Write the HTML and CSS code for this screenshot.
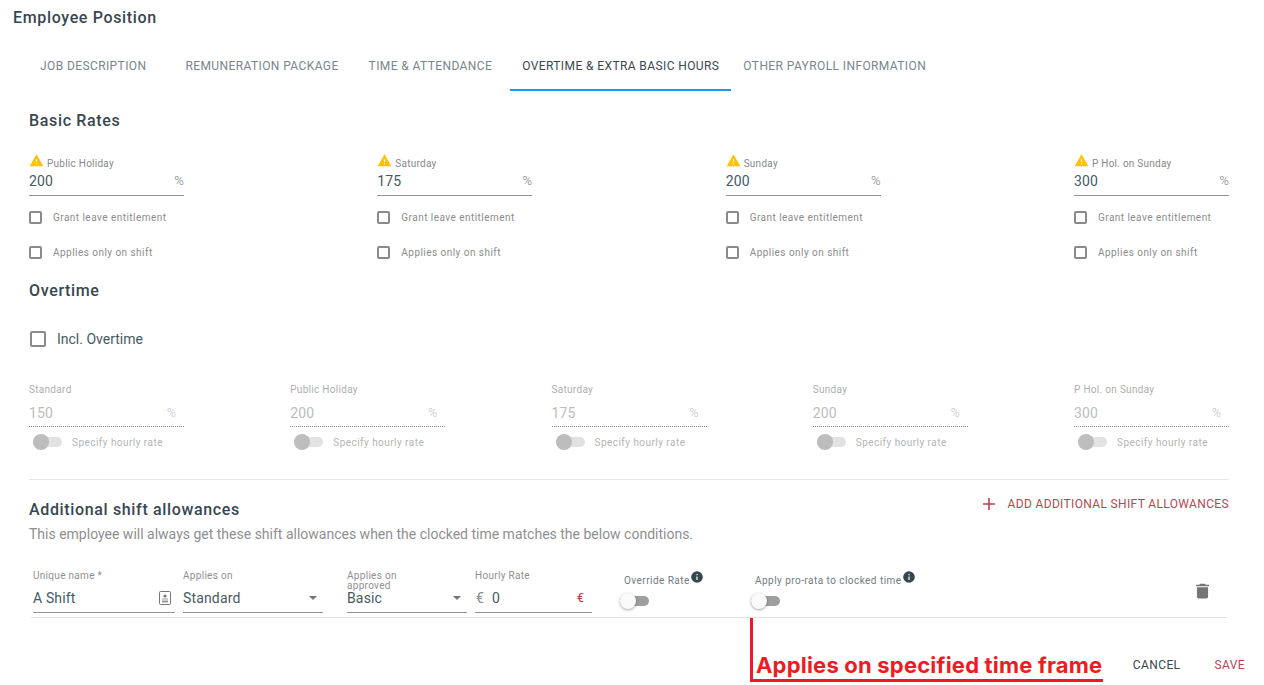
FILE: index.html
```html
<!DOCTYPE html>
<html lang="en">
<head>
    <meta charset="UTF-8">
    <title>Employee Position</title>
    <link rel="stylesheet" href="styles.css">
</head>
<body>
    <svg class="icon-defs" width="0" height="0">
        <symbol id="warn" viewBox="0 0 24 24"><path d="M1 21h22L12 2 1 21zm12-3h-2v-2h2v2zm0-4h-2v-4h2v4z"/></symbol>
        <symbol id="info" viewBox="0 0 24 24"><path d="M12 2a10 10 0 1 0 0 20 10 10 0 0 0 0-20zm1 15h-2v-6h2v6zm0-8h-2V7h2v2z"/></symbol>
    </svg>

    <h1 class="page-title">Employee Position</h1>

    <nav class="tabs">
        <a class="tab tab-first">Job Description</a>
        <a class="tab">Remuneration Package</a>
        <a class="tab">Time &amp; Attendance</a>
        <a class="tab active">Overtime &amp; Extra Basic Hours</a>
        <a class="tab tab-last">Other Payroll Information</a>
    </nav>

    <main class="content">
        <h2 class="section-title basic-title">Basic Rates</h2>
        <div class="rate-row">
            <div class="rate">
                <div class="rate-label"><svg class="warn"><use href="#warn"/></svg>Public Holiday</div>
                <div class="rate-input"><span>200</span><span class="unit">%</span></div>
                <label class="check"><span class="box"></span>Grant leave entitlement</label>
                <label class="check"><span class="box"></span>Applies only on shift</label>
            </div>
            <div class="rate">
                <div class="rate-label"><svg class="warn"><use href="#warn"/></svg>Saturday</div>
                <div class="rate-input"><span>175</span><span class="unit">%</span></div>
                <label class="check"><span class="box"></span>Grant leave entitlement</label>
                <label class="check"><span class="box"></span>Applies only on shift</label>
            </div>
            <div class="rate">
                <div class="rate-label"><svg class="warn"><use href="#warn"/></svg>Sunday</div>
                <div class="rate-input"><span>200</span><span class="unit">%</span></div>
                <label class="check"><span class="box"></span>Grant leave entitlement</label>
                <label class="check"><span class="box"></span>Applies only on shift</label>
            </div>
            <div class="rate">
                <div class="rate-label"><svg class="warn"><use href="#warn"/></svg>P Hol. on Sunday</div>
                <div class="rate-input"><span>300</span><span class="unit">%</span></div>
                <label class="check"><span class="box"></span>Grant leave entitlement</label>
                <label class="check"><span class="box"></span>Applies only on shift</label>
            </div>
        </div>

        <h2 class="section-title overtime-title">Overtime</h2>
        <label class="incl"><span class="box box-large"></span>Incl. Overtime</label>

        <div class="rate-row overtime-row">
            <div class="rate disabled">
                <div class="dis-label">Standard</div>
                <div class="dis-input"><span>150</span><span class="unit">%</span></div>
                <div class="dis-toggle"><span class="toggle"><span class="thumb"></span></span>Specify hourly rate</div>
            </div>
            <div class="rate disabled">
                <div class="dis-label">Public Holiday</div>
                <div class="dis-input"><span>200</span><span class="unit">%</span></div>
                <div class="dis-toggle"><span class="toggle"><span class="thumb"></span></span>Specify hourly rate</div>
            </div>
            <div class="rate disabled">
                <div class="dis-label">Saturday</div>
                <div class="dis-input"><span>175</span><span class="unit">%</span></div>
                <div class="dis-toggle"><span class="toggle"><span class="thumb"></span></span>Specify hourly rate</div>
            </div>
            <div class="rate disabled">
                <div class="dis-label">Sunday</div>
                <div class="dis-input"><span>200</span><span class="unit">%</span></div>
                <div class="dis-toggle"><span class="toggle"><span class="thumb"></span></span>Specify hourly rate</div>
            </div>
            <div class="rate disabled">
                <div class="dis-label">P Hol. on Sunday</div>
                <div class="dis-input"><span>300</span><span class="unit">%</span></div>
                <div class="dis-toggle"><span class="toggle"><span class="thumb"></span></span>Specify hourly rate</div>
            </div>
        </div>

        <hr class="divider">

        <div class="shift-head">
            <div>
                <h2 class="section-title">Additional shift allowances</h2>
                <p class="shift-note">This employee will always get these shift allowances when the clocked time matches the below conditions.</p>
            </div>
            <a class="add-btn">
                <svg class="plus" viewBox="0 0 12 12"><path d="M6 0v12M0 6h12"/></svg>
                Add additional shift allowances
            </a>
        </div>

        <div class="shift-row">
            <div class="cell cell-name">
                <div class="cell-label">Unique name *</div>
                <div class="cell-input">
                    <span>A Shift</span>
                    <svg class="badge" viewBox="0 0 12 14"><path d="M1.500.5h9a1 1 0 0 1 1 1v11a1 1 0 0 1-1 1h-9a1 1 0 0 1-1-1v-11a1 1 0 0 1 1-1z" fill="none" stroke="#777"/><circle cx="6" cy="5" r="1.600" fill="#777"/><path d="M3 7.500h6v1H3zM3 9.500h6v2H3z" fill="#999"/></svg>
                </div>
            </div>
            <div class="cell cell-applies">
                <div class="cell-label">Applies on</div>
                <div class="cell-input"><span>Standard</span><span class="caret"></span></div>
            </div>
            <div class="cell cell-approved">
                <div class="cell-label cell-label-wrap">Applies on approved</div>
                <div class="cell-input"><span>Basic</span><span class="caret"></span></div>
            </div>
            <div class="cell cell-rate">
                <div class="cell-label">Hourly Rate</div>
                <div class="cell-input">
                    <span class="euro-prefix">€</span><span class="rate-value">0</span>
                    <span class="euro-suffix">€</span>
                </div>
            </div>
            <div class="switch-cell switch-override">
                <div class="switch-label">Override Rate<svg class="info"><use href="#info"/></svg></div>
                <span class="toggle toggle-on"><span class="thumb"></span></span>
            </div>
            <div class="switch-cell switch-prorata">
                <div class="switch-label">Apply pro-rata to clocked time<svg class="info"><use href="#info"/></svg></div>
                <span class="toggle toggle-on"><span class="thumb"></span></span>
            </div>
            <svg class="trash" viewBox="0 0 14 16"><path d="M1 14.200C1 15.200 1.800 16 2.800 16h8.400c1 0 1.800-.8 1.800-1.800V4H1v10.200zM14 1.300h-3.500L9.500.3h-5l-1 1H0V3h14V1.300z"/></svg>
        </div>
    </main>

    <footer class="actions">
        <a class="action-btn cancel">Cancel</a>
        <a class="action-btn save">Save</a>
    </footer>

    <div class="callout">Applies on specified time frame</div>
</body>
</html>
```

FILE: styles.css
```css
html, body {
    margin: 0;
    padding: 0;
}

body {
    position: relative;
    height: 685px;
    overflow: hidden;
    background: #ffffff;
    font-family: Roboto, sans-serif;
    color: #455a64;
}

.icon-defs {
    position: absolute;
}

.page-title {
    margin: 0;
    padding-left: 13px;
    font-size: 16px;
    font-weight: 500;
    line-height: 35px;
    height: 41px;
    letter-spacing: 0.65px;
    color: #37474f;
}

.tabs {
    display: flex;
    padding-left: 28px;
    gap: 6px;
}

.tab {
    height: 47px;
    padding: 1px 12px 0;
    line-height: 48px;
    border-bottom: 2px solid transparent;
    font-size: 12px;
    font-weight: 400;
    letter-spacing: 0.4px;
    text-transform: uppercase;
    color: #78868c;
}

.tab-first { margin-right: 9px; }
.tab-last { margin-left: -6px; }

.tab.active {
    color: #37474f;
    border-bottom-color: #2196f3;
}

.content {
    padding: 0 35px 0 29px;
}

.section-title {
    margin: 0;
    font-size: 16px;
    font-weight: 500;
    line-height: 20px;
    letter-spacing: 0.65px;
    color: #37474f;
}

.basic-title {
    margin-top: 20px;
}

.rate-row {
    display: flex;
    justify-content: space-between;
    margin-top: 22px;
}

.rate {
    width: 155px;
}

.rate-label {
    display: flex;
    align-items: flex-end;
    height: 17px;
    font-size: 10px;
    line-height: 12px;
    letter-spacing: 0.25px;
    color: #888888;
}

.warn {
    width: 15px;
    height: 15px;
    margin: 0 3px 2px 0;
    fill: #ffc107;
    flex: none;
}

.rate-input {
    display: flex;
    justify-content: space-between;
    align-items: center;
    height: 21px;
    padding-bottom: 4px;
    border-bottom: 1px solid #949494;
    font-size: 14px;
    letter-spacing: 0.15px;
}

.unit {
    font-size: 13px;
    font-weight: 300;
    color: #7d7d7d;
}

.check {
    display: flex;
    align-items: center;
    height: 35px;
    font-size: 10px;
    letter-spacing: 0.46px;
    color: #8c8c8c;
}

.rate-input + .check {
    margin-top: 4px;
}

.box {
    box-sizing: border-box;
    width: 13px;
    height: 13px;
    margin-right: 11px;
    border: 2px solid #8a8a8a;
    border-radius: 2px;
}

.overtime-title {
    margin-top: 11px;
}

.incl {
    display: flex;
    align-items: center;
    height: 20px;
    margin-top: 28px;
    font-size: 14px;
}

.box-large {
    width: 16px;
    height: 16px;
    margin: 0 11px 0 1px;
}

.overtime-row {
    margin-top: 34px;
}

.dis-label {
    font-size: 10px;
    line-height: 14px;
    letter-spacing: 0.3px;
    color: #aeaeae;
}

.dis-input {
    display: flex;
    justify-content: space-between;
    align-items: center;
    height: 27px;
    margin-top: 2px;
    padding-right: 8px;
    border-bottom: 1px dotted #8a8a8a;
    font-size: 14px;
    letter-spacing: 0.15px;
    color: #bdbdbd;
}

.dis-input .unit {
    font-size: 12px;
    color: #bdbdbd;
}

.dis-toggle {
    display: flex;
    align-items: center;
    height: 16px;
    margin-top: 7px;
    padding-left: 4px;
    font-size: 10px;
    letter-spacing: 0.46px;
    color: #b4b4b4;
}

.dis-toggle .toggle {
    margin-right: 10px;
}

.toggle {
    position: relative;
    display: inline-block;
    width: 29px;
    height: 10px;
    border-radius: 5px;
    background: #e2e2e2;
}

.toggle-on {
    margin-left: -4px;
    background: #9e9e9e;
}

.thumb {
    position: absolute;
    left: 0;
    top: -3px;
    width: 16px;
    height: 16px;
    border-radius: 50%;
    background: #bdbdbd;
}

.toggle-on .thumb {
    background: #fafafa;
    box-shadow: 0 1px 3px rgba(0, 0, 0, 0.35);
}

.divider {
    height: 1px;
    margin: 29px 0 0;
    border: 0;
    background: #e8e8e8;
}

.shift-head {
    display: flex;
    justify-content: space-between;
    margin-top: 20px;
}

.shift-note {
    margin: 4px 0 0;
    font-size: 14px;
    line-height: 20px;
    color: #8f8f8f;
}

.add-btn {
    display: flex;
    align-items: center;
    height: 20px;
    margin-top: -6px;
    font-size: 12px;
    font-weight: 400;
    letter-spacing: 0.35px;
    text-transform: uppercase;
    color: #b04a4f;
}

.plus {
    width: 12px;
    height: 12px;
    margin-right: 13px;
    fill: none;
    stroke: #b04a4f;
    stroke-width: 1.6;
}

.shift-row {
    display: flex;
    align-items: flex-start;
    position: relative;
    width: 1195px;
    height: 47px;
    margin: 26px 0 0 2px;
    border-bottom: 1px solid #e0e0e0;
}

.cell {
    display: flex;
    flex-direction: column;
    height: 43px;
}

.cell-name { width: 142px; margin-left: 2px; }
.cell-applies { width: 140px; margin-left: 8px; }
.cell-approved { width: 120px; margin-left: 24px; }
.cell-rate { width: 117px; margin-left: 8px; }

.cell-label {
    box-sizing: border-box;
    height: 18px;
    padding-top: 1px;
    font-size: 10px;
    line-height: 10px;
    letter-spacing: 0.3px;
    color: #8f8f8f;
}

.cell-label-wrap {
    width: 70px;
}

.cell-input {
    display: flex;
    justify-content: space-between;
    align-items: center;
    height: 20px;
    padding-bottom: 4px;
    border-bottom: 1px solid #949494;
    font-size: 14px;
    letter-spacing: 0.15px;
}

.badge {
    width: 12px;
    height: 14px;
    margin-right: 4px;
}

.caret {
    width: 0;
    height: 0;
    margin-right: 6px;
    border-left: 4.5px solid transparent;
    border-right: 4.5px solid transparent;
    border-top: 4.5px solid #757575;
}

.euro-prefix {
    color: #8a8a8a;
    margin-left: 1px;
}

.rate-value {
    margin-left: 8px;
    margin-right: auto;
}

.euro-suffix {
    margin-right: 8px;
    font-size: 12px;
    color: #b03a3a;
}

.switch-cell {
    display: flex;
    flex-direction: column;
}

.switch-override { width: 131px; margin-left: 32px; }
.switch-prorata { width: 300px; }

.switch-label {
    display: flex;
    align-items: flex-start;
    height: 26px;
    font-size: 10px;
    line-height: 22px;
    letter-spacing: 0.46px;
    color: #6f7b81;
}

.info {
    width: 14px;
    height: 14px;
    fill: #37474f;
}

.trash {
    position: absolute;
    right: 17px;
    top: 13px;
    width: 13px;
    height: 16px;
    fill: #757575;
}

.actions {
    display: flex;
    justify-content: flex-end;
    gap: 34px;
    padding-right: 19px;
    margin-top: 38px;
}

.action-btn {
    font-size: 12px;
    font-weight: 400;
    line-height: 18px;
    letter-spacing: 0.4px;
    text-transform: uppercase;
}

.cancel { color: #37474f; }
.save { color: #b04a4f; }

/* red note drawn on top of the screenshot */
.callout {
    position: absolute;
    left: 750px;
    top: 618px;
    box-sizing: border-box;
    width: 353px;
    height: 64px;
    padding: 34px 0 0 3px;
    border-left: 3px solid #ed1c24;
    border-bottom: 3px solid #ed1c24;
    font-family: Inter, sans-serif;
    font-size: 22px;
    font-weight: 700;
    line-height: 27px;
    letter-spacing: 0.2px;
    white-space: nowrap;
    color: #ed1c24;
}
```
